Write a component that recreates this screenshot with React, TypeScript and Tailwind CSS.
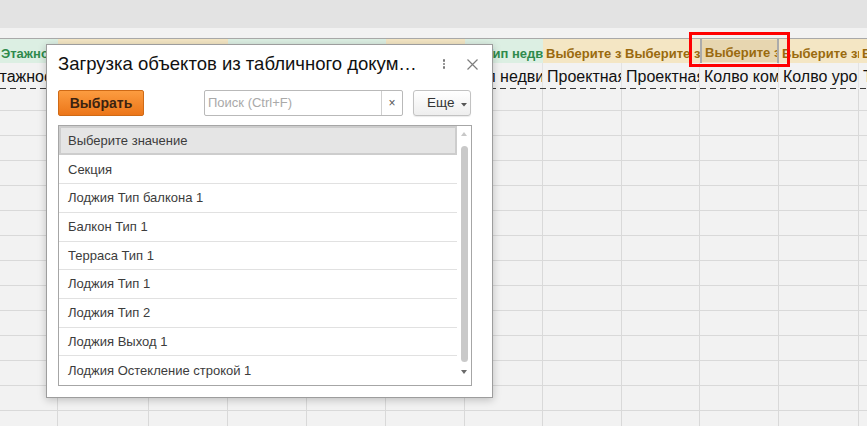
import React from 'react';

type Kind = 'g' | 'y' | 's';
const cols = [58, 91, 79, 79, 79, 79, 78, 79, 78, 79, 80, 60];
const header: { k: Kind; t: string; pl?: number }[] = [
  { k: 'g', t: 'Этажность', pl: 1 },
  { k: 'y', t: '' },
  { k: 'y', t: '' },
  { k: 'g', t: '' },
  { k: 'g', t: '' },
  { k: 'y', t: '' },
  { k: 'g', t: 'Тип недвижимости', pl: 20 },
  { k: 'y', t: 'Выберите значение' },
  { k: 'y', t: 'Выберите значение' },
  { k: 's', t: 'Выберите значение' },
  { k: 'y', t: 'Выберите значение' },
  { k: 'y', t: 'Выберите значение' },
];
const data = ['Этажность', '', '', '', '', '', 'Тип недвижимости', 'Проектная площадь', 'Проектная площадь', 'Колво комнат', 'Колво уровней', 'Тип'];
const items = [
  'Секция',
  'Лоджия Тип балкона 1',
  'Балкон Тип 1',
  'Терраса Тип 1',
  'Лоджия Тип 1',
  'Лоджия Тип 2',
  'Лоджия Выход 1',
  'Лоджия Остекление строкой 1',
];

function HeaderCell({ k, t, w, pl }: { k: Kind; t: string; w: number; pl?: number }) {
  if (k === 's') {
    return (
      <div style={{ width: w }} className="shrink-0 h-full bg-[#f4e6c4] border-x-2 border-[#ababab] py-[1px] overflow-hidden">
        <div className="h-full bg-[#e7d6b0] flex items-center pt-[4px] pl-[3px] whitespace-nowrap overflow-hidden text-[13px] font-bold text-[#9a6a0e]">{t}</div>
      </div>
    );
  }
  const cls = k === 'g' ? 'bg-[#dcefe3] text-[#2f8a4c]' : 'bg-[#f4e6c4] text-[#9a6a0e]';
  return (
    <div style={{ width: w, paddingLeft: pl ?? 3 }} className={`shrink-0 h-full flex items-center pt-[5px] whitespace-nowrap overflow-hidden text-[13px] font-bold ${cls}`}>
      {t}
    </div>
  );
}

export default function App() {
  const bodyRows = Array.from({ length: 14 });
  return (
    <div className="relative w-[867px] h-[426px] overflow-hidden bg-[#f2f2f2] font-['Liberation_Sans',Arial,sans-serif]">
      <div className="h-[28px] bg-[#e3e3e3]" />
      <div className="h-[10px] bg-[#f2f2f2]" />
      <div className="h-px bg-[#a9a9a9]" />
      {/* header row */}
      <div className="flex h-[24px]">
        {header.map((h, i) => (
          <HeaderCell key={i} k={h.k} t={h.t} w={cols[i]} pl={h.pl} />
        ))}
      </div>
      {/* data row */}
      <div className="flex h-[25px] bg-[#f2f2f2]">
        {data.map((d, i) => (
          <div key={i} style={{ width: cols[i] }} className="shrink-0 h-full border-r border-[#e3e3e3] flex items-center pt-[3px] overflow-hidden whitespace-nowrap text-[16px] text-[#111] pl-[4px]">
            <span className={i === 0 ? 'ml-[-16px]' : ''}>{d}</span>
          </div>
        ))}
      </div>
      <div className="h-px bg-[repeating-linear-gradient(90deg,#3a3a3a_0_6px,transparent_6px_10px)]" />
      {/* body rows */}
      {bodyRows.map((_, r) => (
        <div key={r} className={`flex border-b border-[#d9d9d9] ${r === 0 ? 'h-[22px]' : 'h-[25px]'}`}>
          {cols.map((w, i) => (
            <div key={i} style={{ width: w }} className="shrink-0 h-full border-r border-[#d9d9d9]" />
          ))}
        </div>
      ))}

      {/* selection marker */}
      <div className="absolute left-[689px] top-[32px] w-[101px] h-[35px] border-[3px] border-[#ff0000]" />

      {/* dialog */}
      <div className="absolute left-[46px] top-[44px] w-[447px] h-[354px] bg-white border border-[#9d9d9d] shadow-[0_2px_8px_rgba(0,0,0,0.22)] flex flex-col pl-[11px]">
        <div className="h-[38px] flex items-center">
          <div className="flex-1 whitespace-nowrap overflow-hidden text-[18.5px] text-[#111]">Загрузка объектов из табличного докум…</div>
          <div className="flex flex-col gap-[1px] w-[6px] items-center mr-[20px]">
            <span className="w-[2.5px] h-[2.5px] rounded-full bg-[#7a7a7a]" />
            <span className="w-[2.5px] h-[2.5px] rounded-full bg-[#7a7a7a]" />
            <span className="w-[2.5px] h-[2.5px] rounded-full bg-[#7a7a7a]" />
          </div>
          <svg width="11" height="11" viewBox="0 0 11 11" className="mr-[14px]">
            <path d="M0.5 0.5L10.5 10.5M10.5 0.5L0.5 10.5" stroke="#7d7d7d" strokeWidth="1.2" />
          </svg>
        </div>
        <div className="mt-[7px] h-[26px] flex w-[413px]">
          <div className="w-[86px] h-full rounded-[2px] border border-[#cf6a16] bg-[linear-gradient(#fc9c40,#ec7619)] flex items-center justify-center text-[14px] font-bold text-[#3b2210]">
            Выбрать
          </div>
          <div className="ml-[60px] w-[199px] h-full border border-[#b9b9b9] rounded-[2px] flex">
            <div className="flex-1 flex items-center pl-[3px] text-[13px] text-[#a9a9a9] whitespace-nowrap">Поиск (Ctrl+F)</div>
            <div className="w-[21px] h-full border-l border-[#cfcfcf] flex items-center justify-center text-[12px] text-[#555]">×</div>
          </div>
          <div className="ml-[10px] w-[58px] h-full border border-[#c2c2c2] rounded-[3px] bg-[linear-gradient(#ffffff,#eeeeee)] shadow-[0_1px_1px_rgba(0,0,0,0.08)] flex items-center pl-[13px] text-[13.5px] text-[#333]">
            <span>Еще</span>
            <svg width="6" height="4" viewBox="0 0 6 4" className="ml-[7px] mt-[3px]">
              <path d="M0 0H6L3 3.5Z" fill="#555" />
            </svg>
          </div>
        </div>
        <div className="mt-[9px] w-[414px] h-[261px] border border-[#a6a6a6] flex">
          <div className="w-[398px] flex flex-col">
            <div className="h-[29px] border-2 border-[#cdcdcd] bg-[#e5e5e5] flex items-center pl-[7px] text-[13px] text-[#3c3c3c]">
              Выберите значение
            </div>
            {items.map((t, i) => (
              <div key={i} className={`h-[29px] ${i < items.length - 1 ? 'border-b border-[#e1e1e1]' : ''} ${i === 0 ? 'mt-px' : ''} flex items-center pl-[9px] text-[13px] text-[#3c3c3c] whitespace-nowrap`}>
                {t}
              </div>
            ))}
          </div>
          <div className="flex-1 flex flex-col items-center pt-[6px]">
            <svg width="6" height="4" viewBox="0 0 6 4">
              <path d="M3 0L6 4H0Z" fill="#c8c8c8" />
            </svg>
            <div className="mt-[10px] w-[7px] h-[216px] rounded-full bg-[#c9c9c9]" />
            <svg width="6" height="4" viewBox="0 0 6 4" className="mt-[8px]">
              <path d="M0 0H6L3 4Z" fill="#6a6a6a" />
            </svg>
          </div>
        </div>
      </div>
    </div>
  );
}
